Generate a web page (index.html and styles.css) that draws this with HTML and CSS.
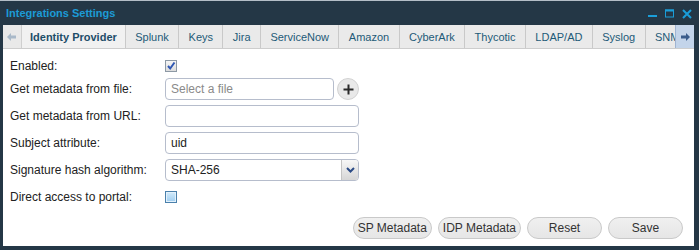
FILE: index.html
```html
<!DOCTYPE html>
<html lang="en">
<head>
    <meta charset="UTF-8">
    <meta name="viewport" content="width=device-width, initial-scale=1.0">
    <title>Integrations Settings</title>

    <link rel="stylesheet" href="styles.css">
</head>
<body>
    <div class="window">
        <!-- barra de titulo -->
        <div class="titlebar">
            <span class="title">Integrations Settings</span>
            <div class="controls">
                <svg width="10" height="10" viewBox="0 0 10 10"><rect x="0" y="6" width="9" height="2" fill="#1a9ed9"/></svg>
                <svg width="10" height="10" viewBox="0 0 10 10"><rect x="0.5" y="1" width="8" height="7" fill="none" stroke="#1a9ed9" stroke-width="1"/><rect x="0" y="0.5" width="9" height="2" fill="#1a9ed9"/></svg>
                <svg width="10" height="10" viewBox="0 0 10 10"><path d="M1 1 L9 9 M9 1 L1 9" stroke="#1a9ed9" stroke-width="2"/></svg>
            </div>
        </div>

        <div class="frame">
            <!-- pestañas -->
            <div class="tabbar">
                <div class="scrollBtn">
                    <svg width="10" height="8" viewBox="0 0 10 8"><path d="M0 4 L4 0 L4 2.5 L9 2.5 L9 5.5 L4 5.5 L4 8 Z" fill="#a9b9c9"/></svg>
                </div>
                <div class="tabs">
                    <div class="tab active">Identity Provider</div>
                    <div class="tab">Splunk</div>
                    <div class="tab">Keys</div>
                    <div class="tab">Jira</div>
                    <div class="tab">ServiceNow</div>
                    <div class="tab">Amazon</div>
                    <div class="tab">CyberArk</div>
                    <div class="tab">Thycotic</div>
                    <div class="tab">LDAP/AD</div>
                    <div class="tab">Syslog</div>
                    <div class="tab">SNMP</div>
                </div>
                <div class="scrollBtn scrollRight">
                    <svg width="10" height="8" viewBox="0 0 10 8"><path d="M10 4 L6 0 L6 2.5 L1 2.5 L1 5.5 L6 5.5 L6 8 Z" fill="#3b5d8c"/></svg>
                </div>
            </div>

            <!-- formulario -->
            <div class="content">
                <div class="row firstRow">
                    <label>Enabled:</label>
                    <span class="check checked">
                        <svg width="10" height="10" viewBox="0 0 10 10"><path d="M2 5 L4.2 7.5 L8.5 1.5" fill="none" stroke="#2f57b3" stroke-width="2"/></svg>
                    </span>
                </div>
                <div class="row">
                    <label>Get metadata from file:</label>
                    <input type="text" class="field fileField" placeholder="Select a file">
                    <span class="addBtn">
                        <svg width="11" height="11" viewBox="0 0 11 11"><path d="M5.5 0.5 V10.5 M0.5 5.5 H10.5" stroke="#2a2a2a" stroke-width="2"/></svg>
                    </span>
                </div>
                <div class="row">
                    <label>Get metadata from URL:</label>
                    <input type="text" class="field">
                </div>
                <div class="row">
                    <label>Subject attribute:</label>
                    <input type="text" class="field" value="uid">
                </div>
                <div class="row">
                    <label>Signature hash algorithm:</label>
                    <div class="select">
                        <span class="selectValue">SHA-256</span>
                        <span class="selectArrow">
                            <svg width="9" height="6" viewBox="0 0 9 6"><path d="M1 1 L4.5 4.5 L8 1" fill="none" stroke="#2b4b86" stroke-width="2"/></svg>
                        </span>
                    </div>
                </div>
                <div class="row">
                    <label>Direct access to portal:</label>
                    <span class="check empty"></span>
                </div>

                <div class="actions">
                    <button class="btn">SP Metadata</button>
                    <button class="btn">IDP Metadata</button>
                    <button class="btn wideBtn">Reset</button>
                    <button class="btn wideBtn">Save</button>
                </div>
            </div>
        </div>
    </div>
</body>
</html>
```

FILE: styles.css
```css
body {
    margin: 0;
    background-color: #243746;
    font-family: "Liberation Sans", Arial, Helvetica, sans-serif;
}

.window {
    width: 699px;
    height: 250px;
    display: flex;
    flex-direction: column;
}

.titlebar {
    height: 24px;
    border-top: 1px solid #b4bec7;
    padding: 0 7px 0 6px;
    display: flex;
    justify-content: space-between;
    align-items: center;
}

.title {
    color: #1c9bd6;
    font-size: 11px;
    font-weight: bold;
}

.controls {
    display: flex;
    gap: 7px;
    margin-top: 2px;
}

.frame {
    flex: 1;
    display: flex;
    flex-direction: column;
    padding: 0 5px 4px 3px;
}

.tabbar {
    height: 23px;
    display: flex;
    background-color: #e6e6e6;
    border-bottom: 1px solid #cdcdcd;
}

.scrollBtn {
    width: 19px;
    flex-shrink: 0;
    display: flex;
    align-items: center;
    justify-content: center;
    background-color: #e9e9e9;
    border-right: 1px solid #cfcfcf;
    box-sizing: border-box;
}

.scrollRight {
    background-color: #c3d4ea;
    border-right: none;
    border-left: 1px solid #9fb4d2;
}

.tabs {
    flex: 1;
    display: flex;
    overflow: hidden;
}

.tab {
    padding: 0 9.4px;
    display: flex;
    align-items: center;
    font-size: 11px;
    color: #1e5a78;
    background-color: #eaeaea;
    border-right: 1px solid #c9c9c9;
    white-space: nowrap;
}

.tab.active {
    padding: 0 8px;
    font-weight: bold;
    color: #1d4d68;
    background-color: #f1f1f1;
}

.content {
    flex: 1;
    background-color: white;
    padding: 9px 11px 0 7px;
}

.row {
    height: 22px;
    margin-bottom: 5px;
    display: flex;
    align-items: center;
}

.firstRow {
    height: 15px;
}

label {
    width: 155px;
    font-size: 12px;
    color: #222;
}

.field {
    width: 194px;
    height: 22px;
    box-sizing: border-box;
    border: 1px solid #b6bdcc;
    border-radius: 4px;
    padding: 0 5px;
    font-family: "Liberation Sans", Arial, sans-serif;
    font-size: 12px;
    color: #222;
    outline: none;
}

.field::placeholder {
    color: #8a8a8a;
}

.fileField {
    width: 169px;
}

.addBtn {
    width: 22px;
    height: 22px;
    margin-left: 3px;
    box-sizing: border-box;
    border: 1px solid #d2d2d2;
    border-radius: 50%;
    background-color: #e9e9e9;
    display: flex;
    align-items: center;
    justify-content: center;
}

.check {
    width: 12px;
    height: 12px;
    box-sizing: border-box;
    display: flex;
    align-items: center;
    justify-content: center;
}

.checked {
    border: 1px solid #8d99a5;
    background: linear-gradient(#f5f5f5, #dcdcdc);
}

.empty {
    border: 1px solid #4a80ab;
    box-shadow: inset 0 0 0 1px #e3f1fb;
    background: linear-gradient(#d2ebfb, #9fcdf0);
}

.select {
    width: 194px;
    height: 22px;
    box-sizing: border-box;
    border: 1px solid #b6bdcc;
    border-radius: 4px;
    display: flex;
    overflow: hidden;
}

.selectValue {
    flex: 1;
    padding: 0 5px;
    font-size: 12px;
    color: #222;
    display: flex;
    align-items: center;
}

.selectArrow {
    width: 16px;
    border-left: 1px solid #c4c4c4;
    background: linear-gradient(#f7f7f7, #d6d6d6);
    display: flex;
    align-items: center;
    justify-content: center;
}

.actions {
    margin-top: 9px;
    display: flex;
    justify-content: flex-end;
    gap: 6px;
}

.btn {
    height: 22px;
    padding: 0 4px;
    border: 1px solid #c9c9c9;
    border-radius: 11px;
    background: linear-gradient(#f0f0f0, #e6e6e6);
    font-family: "Liberation Sans", Arial, sans-serif;
    font-size: 12px;
    color: #333;
    cursor: pointer;
}

.wideBtn {
    width: 75px;
}
```
